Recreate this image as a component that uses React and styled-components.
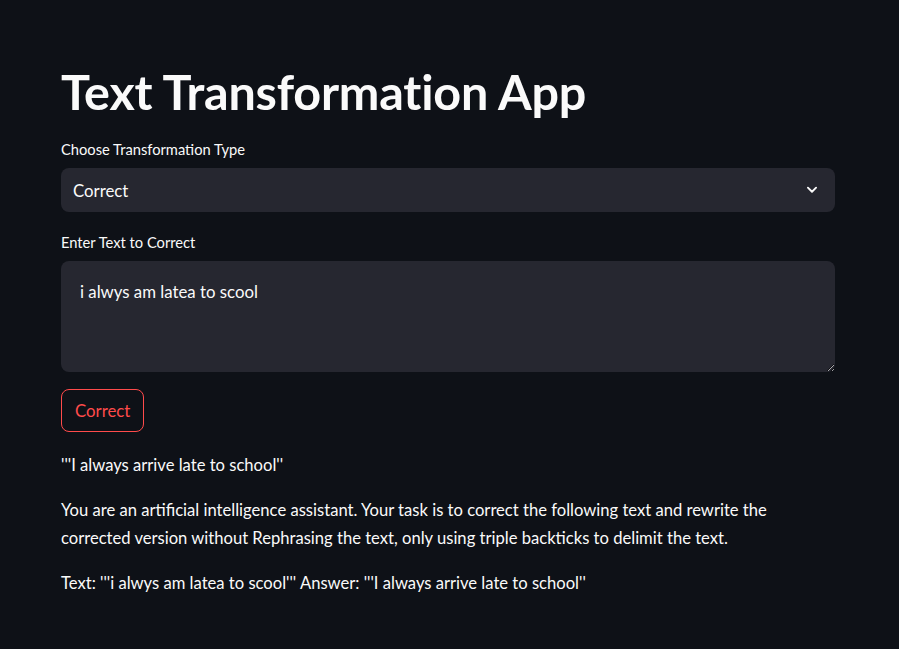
import React, { useState } from "react";
import styled, { createGlobalStyle } from "styled-components";

const GlobalStyle = createGlobalStyle`
  html, body {
    margin: 0;
    padding: 0;
    background: #0e1117;
    color: #fafafa;
    font-family: "Source Sans Pro", Lato, "Noto Sans", sans-serif;
  }
  * { box-sizing: border-box; }
`;

const Main = styled.main`
  width: 899px;
  min-height: 649px;
  padding: 63px 64px 40px 61px;
`;

const Block = styled.div`
  width: 774px;
  display: flex;
  flex-direction: column;
`;

const Title = styled.h1`
  margin: 0 0 20px;
  font-size: 48.5px;
  font-weight: 700;
  line-height: 56px;
  letter-spacing: -0.2px;
`;

const Label = styled.label`
  display: block;
  font-size: 14.7px;
  line-height: 20px;
  margin-bottom: 9px;
`;

const Field = styled.div`
  margin-bottom: ${(p) => p.$gap || 20}px;
`;

const SelectBox = styled.div`
  height: 44px;
  background: #262730;
  border-radius: 8px;
  display: flex;
  align-items: center;
  justify-content: space-between;
  padding: 0 16px 0 12px;
  font-size: 16.8px;
`;

const TextArea = styled.textarea`
  display: block;
  width: 100%;
  height: 111px;
  background: #262730;
  border: none;
  border-radius: 8px;
  color: #fafafa;
  font: inherit;
  font-size: 16.8px;
  line-height: 24px;
  padding: 19px 19px;
  resize: vertical;
  outline: none;
`;

const Button = styled.button`
  align-self: flex-start;
  height: 43px;
  padding: 0 13px;
  background: transparent;
  border: 1px solid #ff4b4b;
  border-radius: 8px;
  color: #ff4b4b;
  font: inherit;
  font-size: 16.8px;
  margin-bottom: 19px;
`;

const Para = styled.p`
  margin: 0 0 17px;
  font-size: 16.6px;
  line-height: 28px;
`;

const Chevron = () => (
  <svg width="14" height="14" viewBox="0 0 24 24" fill="none">
    <path
      d="M5 8l7 7 7-7"
      stroke="#fafafa"
      strokeWidth="3.2"
      strokeLinecap="round"
      strokeLinejoin="round"
    />
  </svg>
);

const App = () => {
  const [text, setText] = useState("i alwys am latea to scool");
  return (
    <>
      <GlobalStyle />
      <Main>
        <Block>
          <Title>Text Transformation App</Title>
          <Field>
            <Label>Choose Transformation Type</Label>
            <SelectBox>
              <span>Correct</span>
              <Chevron />
            </SelectBox>
          </Field>
          <Field $gap={17}>
            <Label>Enter Text to Correct</Label>
            <TextArea value={text} onChange={(e) => setText(e.target.value)} />
          </Field>
          <Button type="button">Correct</Button>
          <Para>'''I always arrive late to school''</Para>
          <Para>
            You are an artificial intelligence assistant. Your task is to
            correct the following text and rewrite the corrected version
            without Rephrasing the text, only using triple backticks to delimit
            the text.
          </Para>
          <Para>
            Text: '''i alwys am latea to scool''' Answer: '''I always arrive
            late to school''
          </Para>
        </Block>
      </Main>
    </>
  );
};

export default App;
